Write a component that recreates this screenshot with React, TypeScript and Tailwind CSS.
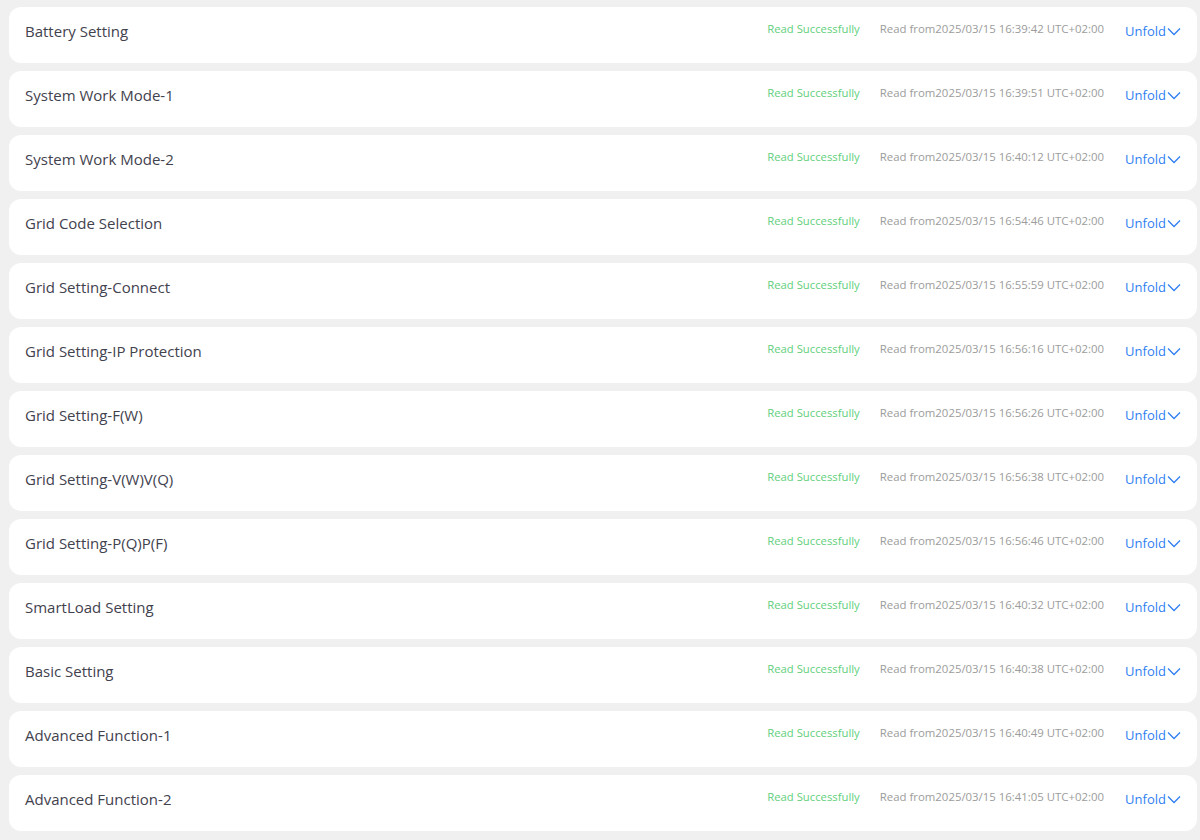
const rows: { title: string; time: string }[] = [
  { title: 'Battery Setting', time: '16:39:42' },
  { title: 'System Work Mode-1', time: '16:39:51' },
  { title: 'System Work Mode-2', time: '16:40:12' },
  { title: 'Grid Code Selection', time: '16:54:46' },
  { title: 'Grid Setting-Connect', time: '16:55:59' },
  { title: 'Grid Setting-IP Protection', time: '16:56:16' },
  { title: 'Grid Setting-F(W)', time: '16:56:26' },
  { title: 'Grid Setting-V(W)V(Q)', time: '16:56:38' },
  { title: 'Grid Setting-P(Q)P(F)', time: '16:56:46' },
  { title: 'SmartLoad Setting', time: '16:40:32' },
  { title: 'Basic Setting', time: '16:40:38' },
  { title: 'Advanced Function-1', time: '16:40:49' },
  { title: 'Advanced Function-2', time: '16:41:05' },
];

function SettingRow({ title, time }: { title: string; time: string }) {
  return (
    <div className="flex h-14 items-start justify-between rounded-xl bg-white pl-4 pr-[16px]">
      <span className="pt-[13px] text-[15px] leading-[22px] text-[#42424e]">{title}</span>
      <div className="flex items-start">
        <span className="pt-[13px] text-[11.3px] leading-[18px] text-[#62d07c]">Read Successfully</span>
        <span className="ml-[20px] pt-[13px] text-[11.4px] leading-[18px] text-[#9c9c9c]">
          Read from2025/03/15 {time} UTC+02:00
        </span>
        <button type="button" className="ml-[21px] flex items-center pt-[14px] text-[13px] leading-[20px] text-[#2f7ff2]">
          Unfold
          <svg width="14" height="9" viewBox="0 0 14 9" className="ml-px" fill="none">
            <polyline points="1,1.5 7,7.5 13,1.5" stroke="currentColor" strokeWidth="1.3" />
          </svg>
        </button>
      </div>
    </div>
  );
}

export default function App() {
  return (
    <div className="min-h-[840px] bg-[#f0f0f0] pl-[9px] pr-[3px] pt-[7px] font-['Open_Sans',sans-serif]">
      <div className="flex flex-col gap-2">
        {rows.map((r) => (
          <SettingRow key={r.title} title={r.title} time={r.time} />
        ))}
      </div>
    </div>
  );
}
